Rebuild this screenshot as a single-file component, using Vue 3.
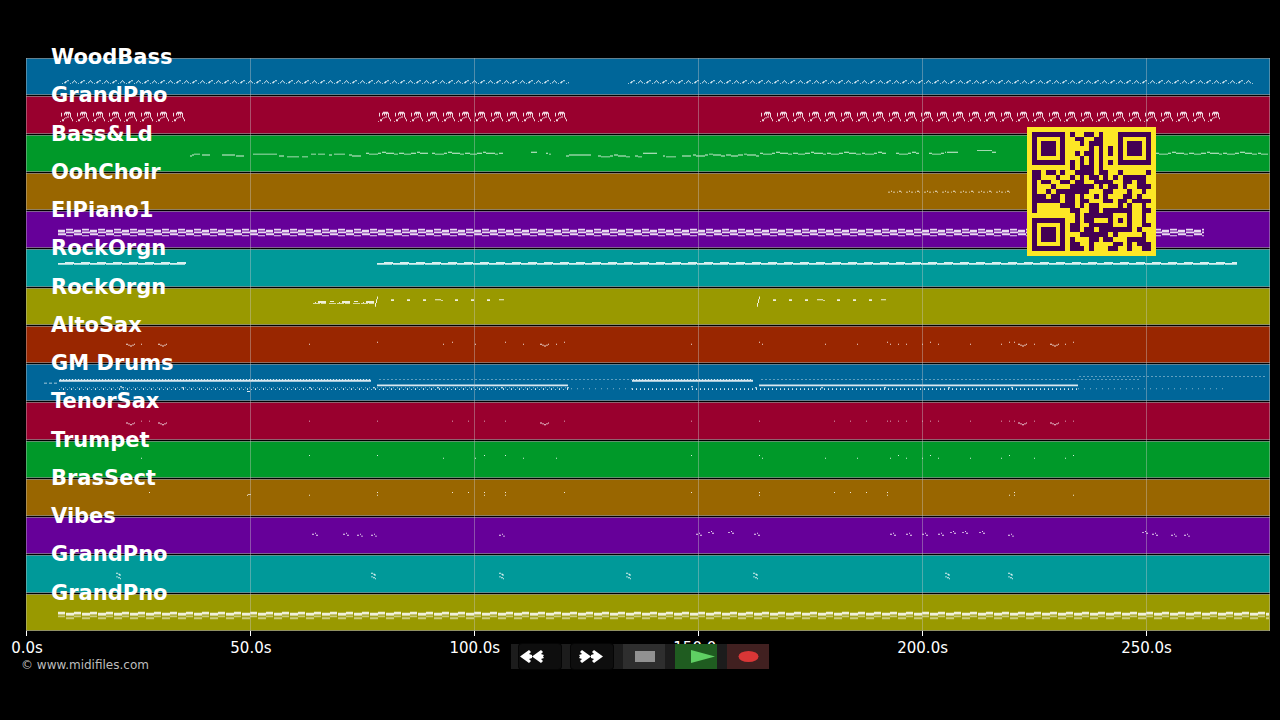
<script setup>
const trackNames = ['WoodBass', 'GrandPno', 'Bass&Ld', 'OohChoir', 'ElPiano1', 'RockOrgn', 'RockOrgn', 'AltoSax', 'GM Drums', 'TenorSax', 'Trumpet', 'BrasSect', 'Vibes', 'GrandPno', 'GrandPno']
const hues = ['blue', 'crimson', 'green', 'brown', 'purple', 'teal', 'olive', 'rust']
const ticks = ['0.0s', '50.0s', '100.0s', '150.0s', '200.0s', '250.0s']

// A motif is a list of [x, y, width, height]; it is stamped along the timeline.
const stamp = (motifs, from, to, step) => {
  let d = ''
  let n = 0
  for (let x = from; x < to; x += step, n++) {
    for (const [dx, y, w, h = 1] of motifs[n % motifs.length]) {
      const width = Math.min(w, to - x - dx)
      if (width > 0) d += box(x + dx, y, width, h)
    }
  }
  return d
}
const box = (x, y, w, h = 1) => `M${x} ${y}h${w}v${h}h${-w}z`
const boxes = (list) => list.map((b) => box(...b)).join('')
const dots = (xs, y, size = 1) => xs.map((x) => box(x, y, size, 1)).join('')
const contour = (from, to, y, steps = [0, 1, 1, 0, -1, 0, 0, 1]) => {
  let d = ''
  let n = 0
  for (let x = from; x < to; n++) {
    const w = Math.min(3 + (n % 3), to - x)
    d += box(x, y + steps[n % steps.length], w)
    x += w + (n % 4 === 3 ? 1 : 0)
  }
  return d
}
const smile = (x, y) => boxes([[x, y, 2], [x + 2, y + 1, 2], [x + 4, y + 2, 2], [x + 6, y + 1, 2], [x + 8, y, 1]])

const bassA = [[0, 26, 1], [2, 25, 2], [3, 24, 2], [5, 23, 2]]
const bassB = [[0, 26, 1], [2, 25, 1], [3, 24, 1], [4, 23, 1], [5, 24, 1], [6, 25, 1]]
const bass = stamp([bassA, bassB], 36, 543, 8) + stamp([bassA, bassB], 602, 1228, 8)

const pnoCell = [[0, 26, 1], [1, 17, 1, 4], [4, 17, 1, 3], [5, 16, 5, 2], [6, 18, 1, 2], [8, 18, 1, 2], [10, 17, 1, 5], [7, 21, 2], [5, 22, 2], [4, 23, 1], [2, 24, 2, 2], [11, 22, 1, 2], [12, 24, 1, 2]]
const pno = stamp([pnoCell], 34, 160, 16) + stamp([pnoCell], 352, 542, 16) + stamp([pnoCell], 734, 1194, 16)

const lead = boxes([[164, 21, 2], [166, 20, 2], [168, 19, 6], [176, 20, 8], [196, 20, 13], [210, 21, 8], [227, 19, 24], [253, 21, 5], [261, 22, 12], [276, 22, 6], [285, 19, 5], [292, 19, 7], [303, 20, 3], [308, 19, 11], [505, 17, 6], [520, 18, 2], [523, 19, 2], [540, 21, 3], [543, 20, 22], [617, 18, 14], [637, 21, 2], [640, 22, 10], [656, 21, 9], [921, 17, 11], [951, 15, 15], [966, 17, 4]]) +
  contour(323, 335, 20) + contour(340, 402, 18) + contour(406, 477, 18) + contour(572, 605, 21) + contour(609, 616, 21) + contour(667, 733, 20) + contour(734, 860, 18) + contour(870, 893, 18) + contour(903, 920, 18) + contour(1130, 1242, 18)

const choir = stamp([[[0, 19, 2], [3, 18, 1], [5, 19, 2]], [[0, 19, 1], [2, 18, 2], [4, 19, 1]]], 862, 984, 9)

const epA = [[0, 19, 7, 3], [0, 23, 8, 2]]
const epB = [[0, 18, 7, 2], [0, 21, 8, 2], [0, 25, 7, 1]]
const epiano = stamp([epA, epB], 32, 1178, 8)
const organ = (from, to) => stamp([[[0, 14, 7, 2], [7, 13, 9, 2], [6, 15, 9, 1]]], from, to, 16)
const organ1 = organ(32, 160) + organ(351, 1211)

const stab = (x) => boxes([[x, 11, 3], [x, 12, 3]])
const slash = (x) => boxes([[x, 15, 1, 4], [x + 1, 11, 1, 4], [x + 2, 8, 1, 3]])
const organ2 = stamp([[[0, 15, 7, 1], [2, 14, 1], [5, 13, 3, 2]], [[0, 13, 5, 3]], [[0, 15, 7], [1, 13, 4]]], 287, 348, 8) +
  [349, 731].map(slash).join('') + [365, 381, 397, 429, 445, 461, 747, 763, 779, 811, 827, 843].map(stab).join('') +
  boxes([[409, 11, 6], [415, 12, 2], [473, 11, 5], [791, 11, 6], [797, 12, 2], [855, 11, 5]])

const smiles = [100, 132, 514, 992, 1024]
const alto = smiles.map((x) => smile(x, 18)).join('') + dots([351, 426, 479, 538, 733, 861, 904, 983, 988, 1047], 16) + dots([115, 283, 417, 449, 497, 530, 665, 736, 799, 831, 864, 872, 880, 896, 912, 944, 975, 1008, 1039], 18)
const tenor = smiles.map((x) => smile(x, 21)).join('') + dots([115, 123, 283, 351, 426, 442, 458, 479, 538, 665, 733, 808, 824, 840, 861, 864, 872, 880, 896, 904, 912, 944, 975, 983, 988, 1008, 1039, 1047], 19)
const trumpet = dots([115, 417, 449, 497, 530, 736, 799, 831, 864, 880, 896, 912, 944, 975, 1008, 1039], 17) + dots([283, 351, 458, 479, 665, 733, 872, 904, 983, 1047], 14)
const brass = dots([123, 351, 426, 442, 458, 479, 538, 665, 733, 808, 824, 840, 861, 988], 13) + dots([221, 283, 351, 458, 479, 733, 861, 983, 988, 1047], 16) + box(222, 15, 3)

const vibeMark = (x, y) => boxes([[x, y + 1, 2], [x + 3, y, 1], [x + 4, y + 2, 2]])
const vibes = [[286, 16], [317, 16], [331, 17], [345, 17], [473, 17], [670, 16], [682, 14], [702, 14], [728, 16], [864, 16], [880, 16], [896, 16], [912, 16], [924, 14], [936, 14], [953, 14], [982, 17], [1116, 14], [1126, 16], [1145, 17], [1158, 17]].map(([x, y]) => vibeMark(x, y)).join('')

const low = [90, 345, 473, 600, 727, 919, 982].map((x) => boxes([[x, 18, 2], [x + 2, 19, 2], [x + 3, 20, 2], [x, 22, 2], [x + 2, 23, 2], [x + 4, 24, 1]])).join('')

const drums = stamp([[[0, 19, 3]]], 18, 31, 5) + box(33, 16, 312, 2) + stamp([[[0, 15, 1]]], 34, 345, 3) +
  box(351, 21, 191, 2) + box(606, 16, 121, 2) + box(733, 21, 319, 2) + stamp([[[0, 15, 1]]], 607, 726, 3) +
  stamp([[[0, 26, 1]], [[0, 25, 1, 2]]], 33, 542, 4) + stamp([[[0, 25, 1, 2]]], 606, 1052, 4) +
  boxes([[94, 23, 2], [96, 24, 2], [156, 24, 2], [221, 28, 3], [283, 24, 2], [347, 24, 2], [411, 24, 2], [475, 24, 2], [541, 24, 2], [665, 23, 2], [729, 24, 2], [795, 24, 2], [858, 24, 2], [922, 24, 2], [985, 24, 2]])
const drumsSoft = stamp([[[0, 15, 2]]], 353, 606, 4) + stamp([[[0, 15, 2]]], 735, 1115, 4) + stamp([[[0, 12, 2]]], 1053, 1240, 4) + stamp([[[0, 25, 1]]], 545, 606, 6) + stamp([[[0, 25, 1]]], 1052, 1200, 6) + stamp([[[0, 24, 1]]], 35, 542, 4)

const lastA = [[0, 18, 7, 3]]
const lastB = [[0, 19, 8, 3]]
const last = stamp([lastA, lastB], 32, 1243, 8)
const lastSoft = stamp([[[0, 22, 7, 2]], [[0, 22, 8, 1], [0, 24, 8, 2]]], 32, 1243, 8)

const notes = [bass, pno, lead, choir, epiano, organ1, organ2, alto, drums, tenor, trumpet, brass, vibes, low, last]
const soft = { 8: drumsSoft, 14: lastSoft }
const tracks = trackNames.map((name, i) => ({ name, hue: hues[i % 8], notes: notes[i], soft: soft[i] || '' }))

const qr = [
  '#######.#..##.#...#######',
  '#.....#..##..##...#.....#',
  '#.###.#...#.###...#.###.#',
  '#.###.#.....#.#.#.#.###.#',
  '#.###.#..#.##.#.#.#.###.#',
  '#.....#...#.#.#...#.....#',
  '#######.#.#.#.#.#.#######',
  '........#.###.#..........',
  '##.##.#..####.##..#.....#',
  '##...#..#.#.##.#.#.#####.',
  '#.##..##.##..####..##.##.',
  '#...#...#####.#.##.#..###',
  '#..#.#######...##...#..#.',
  '###.##.##.#..#.#...##.#..',
  '######.##.##...##.##.####',
  '#.....###.#.##....#.#..#.',
  '#.......##..##.######..##',
  '.........#.######...#..#.',
  '#######..#.##...#.#.#..#.',
  '#.....#.##..#####...#..##',
  '#.###.#.##.##.#######.#..',
  '#.###.#...######.#.....#.',
  '#.###.#.#...##.##...####.',
  '#.....#.##..#....##.#.###',
  '#######.###.#...##..#..##',
]
const qrPath = qr.map((row, y) => [...row].map((c, x) => (c === '#' ? box(x, y, 1) : '')).join('')).join('')
</script>

<template>
  <main class="player">
    <section class="chart" aria-label="Tracks">
      <div v-for="(t, i) in tracks" :key="i" class="track" :class="t.hue">
        <svg class="notes" viewBox="0 0 1244 38" preserveAspectRatio="none" aria-hidden="true">
          <path class="soft" :d="t.soft" />
          <path :d="t.notes" />
        </svg>
        <h2 class="name">{{ t.name }}</h2>
      </div>
      <svg class="grid-lines" viewBox="0 0 1244 578" preserveAspectRatio="none" aria-hidden="true">
        <path class="grid-line" d="M0 0h1v573h-1zM224 0h1v573h-1zM448 0h1v573h-1zM672 0h1v573h-1zM896 0h1v573h-1zM1120 0h1v573h-1zM1243 0h1v573h-1z" />
        <path class="tick" d="M0 573h1v5h-1zM224 573h1v5h-1zM448 573h1v5h-1zM672 573h1v5h-1zM896 573h1v5h-1zM1120 573h1v5h-1z" />
      </svg>
      <svg class="qr" viewBox="-1 -1 27 27" role="img" aria-label="QR code" shape-rendering="crispEdges">
        <path class="qr-paper" d="M-1 -1h27v27h-27z" />
        <path class="qr-ink" :d="qrPath" />
      </svg>
    </section>

    <div class="axis">
      <span v-for="t in ticks" :key="t" class="axis-label">{{ t }}</span>
    </div>

    <footer class="credit">© www.midifiles.com</footer>

    <nav class="controls" aria-label="Playback">
      <button class="control seek" type="button" aria-label="Rewind">
        <svg class="icon" viewBox="0 0 42 25"><path d="M1 12.500L10 6L12 8L10 10L13 11V14L10 15L12 17L10 19ZM13 12.500L22 6L24 8L22 10L25 11L24 12.500L25 14L22 15L24 17L22 19Z" /></svg>
      </button>
      <button class="control seek" type="button" aria-label="Fast forward">
        <svg class="icon" viewBox="0 0 42 25"><path d="M32 12.500L23 6L21 8L23 10L20 11V14L23 15L21 17L23 19ZM20 12.500L11 6L9 8L11 10L8 11L9 12.500L8 14L11 15L9 17L11 19Z" /></svg>
      </button>
      <button class="control stop" type="button" aria-label="Stop">
        <svg class="icon" viewBox="0 0 42 25"><path d="M12 7H32V18H12Z" /></svg>
      </button>
      <button class="control play" type="button" aria-label="Play">
        <svg class="icon" viewBox="0 0 42 25"><path d="M16 6L40 12.500L16 19Z" /></svg>
      </button>
      <button class="control record" type="button" aria-label="Record">
        <svg class="icon" viewBox="0 0 42 25"><ellipse cx="21.500" cy="12.500" rx="10" ry="5.500" /></svg>
      </button>
    </nav>
  </main>
</template>

<style>
body {
  margin: 0;
  background: #000;
}
</style>

<style scoped>
.player {
  position: relative;
  box-sizing: border-box;
  min-height: 100vh;
  padding: 58px 10px 0 26px;
  background: #000;
  color: #fff;
  font-family: "DejaVu Sans", sans-serif;
}
.chart {
  position: relative;
  display: grid;
  grid-auto-rows: 1fr;
  gap: 1px;
  height: calc(100vh - 147px);
  min-height: 450px;
}
.track {
  position: relative;
  min-height: 0;
  box-sizing: border-box;
  border: solid rgba(140, 140, 140, 0.7);
  border-width: 1px 0;
}
.blue { background-color: #006699; }
.crimson { background-color: #99002e; }
.green { background-color: #009929; }
.brown { background-color: #996600; }
.purple { background-color: #660099; }
.teal { background-color: #009999; }
.olive { background-color: #999900; }
.rust { background-color: #992600; }
.notes {
  display: block;
  width: 100%;
  height: 100%;
  fill: rgba(255, 255, 255, 0.85);
}
.soft {
  fill: rgba(255, 255, 255, 0.5);
}
.name {
  position: absolute;
  left: 25px;
  top: -14px;
  z-index: 1;
  margin: 0;
  font-size: 21px;
  line-height: 24px;
  font-weight: 700;
  white-space: nowrap;
}
.grid-lines {
  position: absolute;
  left: 0;
  top: 0;
  width: 100%;
  height: calc(100% + 5px);
}
.grid-line { fill: rgba(200, 200, 200, 0.4); }
.tick { fill: #fff; }
.qr {
  position: absolute;
  right: 114px;
  top: 69px;
  z-index: 2;
  width: 129px;
  height: 129px;
}
.qr-paper { fill: #fde725; }
.qr-ink { fill: #440154; }
.axis {
  display: grid;
  grid-template-columns: repeat(6, 18%);
  margin-left: -9%;
  padding: 7px 0 0 1px;
  width: 100%;
}
.axis-label {
  font-size: 15px;
  line-height: 20px;
  text-align: center;
}
.credit {
  margin: 0 0 0 -5px;
  font-size: 12px;
  line-height: 14px;
  color: #bdbdbd;
}
.controls {
  position: absolute;
  left: 50%;
  top: calc(100vh - 76px);
  display: flex;
  justify-content: flex-end;
  gap: 10px;
  width: 258px;
  transform: translateX(-50%);
  background: #1c1c1c;
}
.control {
  display: block;
  width: 42px;
  height: 25px;
  padding: 0;
  border: 0;
}
.icon {
  display: block;
  width: 42px;
  height: 25px;
}
.seek {
  border-radius: 3px;
  background: #0e0e0e;
  box-shadow: 0 0 0 1px #050505;
}
.seek .icon { fill: #fff; }
.stop { background: #2e2e2e; }
.stop .icon { fill: #919191; }
.play { background: #1f5c20; }
.play .icon { fill: #5fcf63; }
.record { background: #412020; }
.record .icon { fill: #d93636; }
</style>
